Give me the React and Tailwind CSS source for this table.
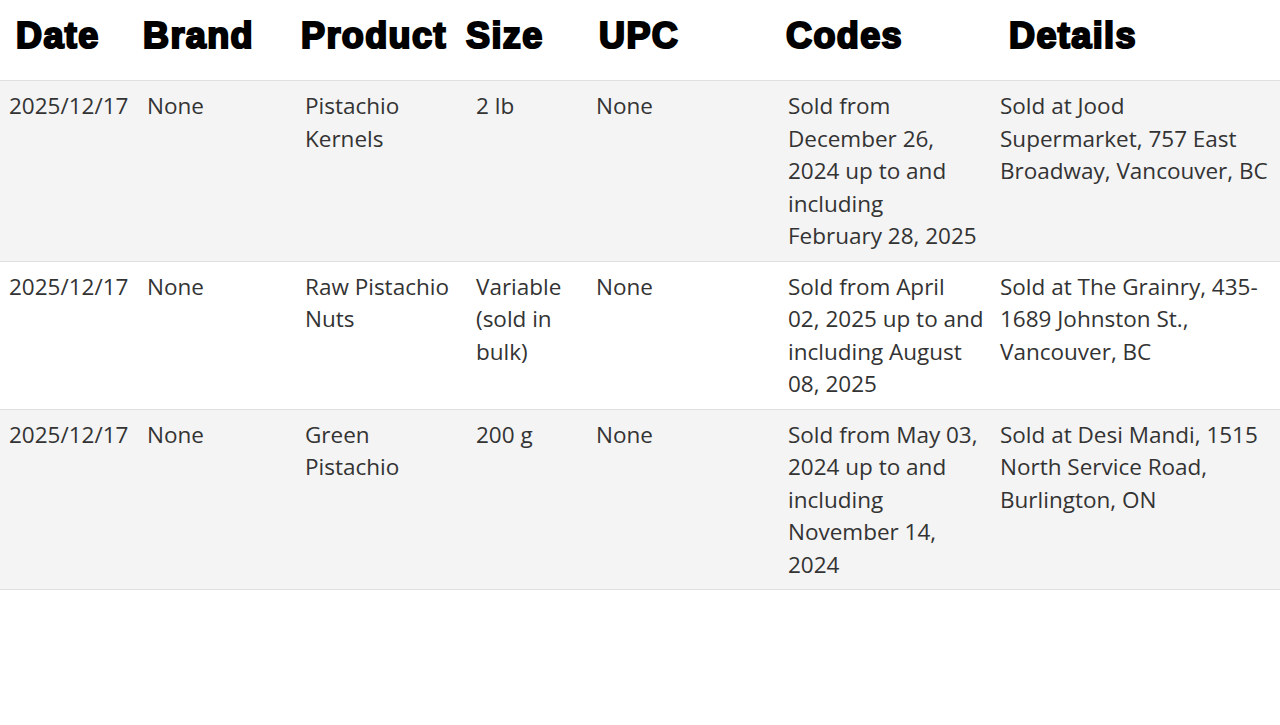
import React from "react";

const rows = [
  {
    cells: [
      ["2025/12/17"],
      ["None"],
      ["Pistachio", "Kernels"],
      ["2 lb"],
      ["None"],
      ["Sold from", "December 26,", "2024 up to and", "including", "February 28, 2025"],
      ["Sold at Jood", "Supermarket, 757 East", "Broadway, Vancouver, BC"],
    ],
    shade: true,
  },
  {
    cells: [
      ["2025/12/17"],
      ["None"],
      ["Raw Pistachio", "Nuts"],
      ["Variable", "(sold in", "bulk)"],
      ["None"],
      ["Sold from April", "02, 2025 up to and", "including August", "08, 2025"],
      ["Sold at The Grainry, 435-", "1689 Johnston St.,", "Vancouver, BC"],
    ],
    shade: false,
  },
  {
    cells: [
      ["2025/12/17"],
      ["None"],
      ["Green", "Pistachio"],
      ["200 g"],
      ["None"],
      ["Sold from May 03,", "2024 up to and", "including", "November 14,", "2024"],
      ["Sold at Desi Mandi, 1515", "North Service Road,", "Burlington, ON"],
    ],
    shade: true,
  },
];

const headers = [
  { label: "Date", w: "w-[127px]" },
  { label: "Brand", w: "w-[158px]" },
  { label: "Product", w: "w-[165px]" },
  { label: "Size", w: "w-[133px]" },
  { label: "UPC", w: "w-[187px]" },
  { label: "Codes", w: "w-[223px]" },
  { label: "Details", w: "flex-1" },
];

export default function App() {
  return (
    <div className="w-[1280px] h-[725px] bg-white overflow-hidden">
      <div className="flex items-center h-[80px] pl-[16px] pb-[8px] font-['Liberation_Sans',Arial,sans-serif] font-bold text-[36px] leading-[44px] text-black tracking-[1.4px] [-webkit-text-stroke:2.2px_black]">
        {headers.map((h) => (
          <div key={h.label} className={h.w}>
            {h.label}
          </div>
        ))}
      </div>
      <table className="w-[1280px] table-fixed border-collapse font-['Open_Sans','Noto_Sans',sans-serif] text-[22.5px] leading-[32.5px] text-[#333333]">
        <colgroup>
          <col className="w-[138px]" />
          <col className="w-[158px]" />
          <col className="w-[171px]" />
          <col className="w-[120px]" />
          <col className="w-[192px]" />
          <col className="w-[212px]" />
          <col className="w-[289px]" />
        </colgroup>
        <tbody>
          {rows.map((r, i) => (
            <tr
              key={i}
              className={`border-t border-b border-[#e0e0e0] ${r.shade ? "bg-[#f4f4f4]" : "bg-white"}`}
            >
              {r.cells.map((lines, j) => (
                <td key={j} className="align-top pl-[9px] pr-0 pt-[9px] pb-[8px] whitespace-nowrap">
                  {lines.map((l, k) => (
                    <div key={k}>{l}</div>
                  ))}
                </td>
              ))}
            </tr>
          ))}
        </tbody>
      </table>
    </div>
  );
}
